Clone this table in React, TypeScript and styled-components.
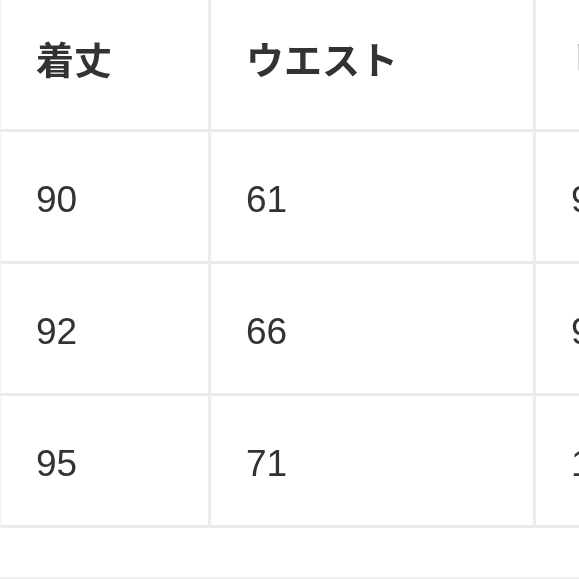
import React from 'react';
import styled, { createGlobalStyle } from 'styled-components';

const GlobalStyle = createGlobalStyle`
  html, body {
    margin: 0;
    padding: 0;
    background: #ffffff;
  }
  body {
    width: 579px;
    height: 579px;
    overflow: hidden;
    font-family: "Liberation Sans", "Noto Sans CJK JP", sans-serif;
    color: #333333;
    -webkit-font-smoothing: antialiased;
  }
`;

// grayscale filter keeps subpixel fringes off the clipped glyph at the right edge
const Page = styled.div`
  width: 579px;
  height: 579px;
  display: flex;
  flex-direction: column;
  overflow: hidden;
  border-bottom: 2px solid #efefef;
  box-sizing: border-box;
  filter: grayscale(1);
`;

const SizeTable = styled.table`
  border-collapse: separate;
  border-spacing: 0;
  table-layout: fixed;
  width: 760px;
  border-left: 1px solid #f2f2f2;
`;

const HeadCell = styled.th<{ $width: number }>`
  width: ${({ $width }) => $width}px;
  height: 115px;
  padding: 0 0 14px 35px;
  box-sizing: content-box;
  text-align: left;
  vertical-align: middle;
  font-family: "Noto Sans CJK JP", "Liberation Sans", sans-serif;
  font-weight: 700;
  font-size: 38px;
  line-height: 1;
  color: #333333;
  white-space: nowrap;
  overflow: hidden;
  border-right: 3px solid #ececec;
  border-bottom: 3px solid #ececec;
`;

const Cell = styled.td`
  height: 123px;
  padding: 6px 0 0 35px;
  text-align: left;
  vertical-align: middle;
  font-family: "Liberation Sans", Arial, sans-serif;
  font-size: 37px;
  line-height: 1;
  color: #333333;
  white-space: nowrap;
  overflow: hidden;
  border-right: 3px solid #ececec;
  border-bottom: 3px solid #ececec;
`;

const columns = [
  { label: '着丈', width: 172 },
  { label: 'ウエスト', width: 287 },
  { label: 'ヒップ', width: 200 },
];

const rows = [
  ['90', '61', '94'],
  ['92', '66', '98'],
  ['95', '71', '102'],
];

const App: React.FC = () => (
  <>
    <GlobalStyle />
    <Page>
      <SizeTable>
        <thead>
          <tr>
            {columns.map((col) => (
              <HeadCell key={col.label} $width={col.width}>
                {col.label}
              </HeadCell>
            ))}
          </tr>
        </thead>
        <tbody>
          {rows.map((row, i) => (
            <tr key={i}>
              {row.map((value, j) => (
                <Cell key={j}>{value}</Cell>
              ))}
            </tr>
          ))}
        </tbody>
      </SizeTable>
    </Page>
  </>
);

export default App;
